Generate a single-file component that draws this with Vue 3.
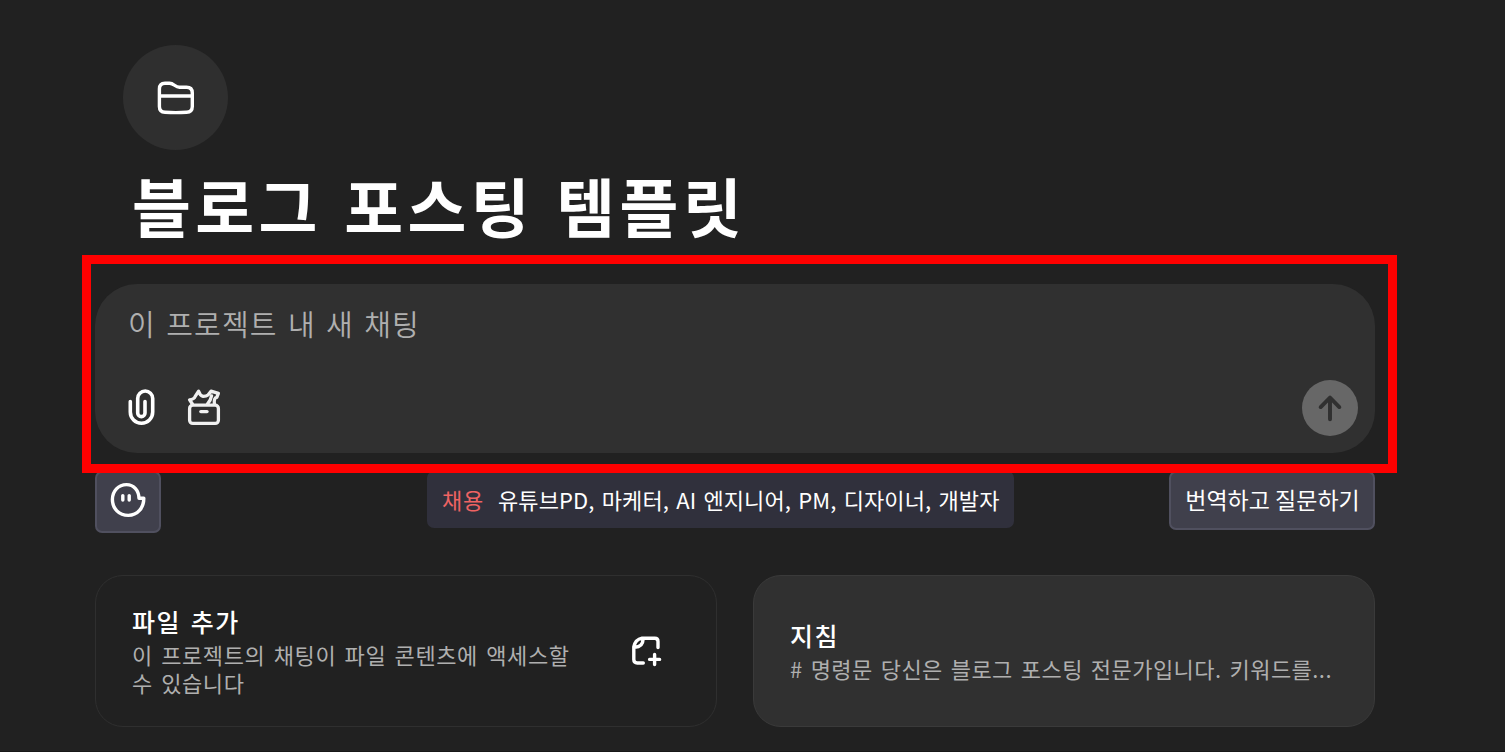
<template>
  <div class="page">
    <header class="project-header">
      <div class="project-icon">
        <svg width="38" height="36" viewBox="0 0 38 36">
          <path d="M2.4 9Q2.4 3.2 8 3.2H12.5C17 3.2 18 7.3 22.5 7.3H29.5Q35.3 7.3 35.3 13V26.5Q35.3 32 29.5 32.3Q18.8 33 8 32.3Q2.4 32 2.4 26.5ZM2.4 16H35.3" />
        </svg>
      </div>
      <h1 class="project-title">블로그 포스팅 템플릿</h1>
    </header>

    <!-- 채팅 입력창 -->
    <section class="composer">
      <div class="placeholder">이 프로젝트 내 새 채팅</div>
      <div class="composer-actions">
        <button class="icon-button clip">
          <svg width="30" height="40" viewBox="0 0 30 40">
            <path d="M3.3 14.5V25.1A11.2 11.2 0 0 0 25.7 25.1V11.5A7.5 7.5 0 0 0 10.7 11.5V26A3.65 3.65 0 0 0 18 26V14.5" />
          </svg>
        </button>
        <button class="icon-button tools">
          <svg width="36" height="40" viewBox="0 0 36 40">
            <rect x="3.6" y="18.2" width="28.8" height="18.2" rx="3.2" />
            <path d="M14.8 24.6H21" />
            <path d="M6.4 17L3.6 12.8Q8.4 12.2 9.2 9.4L12.6 4.2Q14 8.6 17.2 9.4Q20.4 9.2 22 8L25 4.2L32.4 6.4L30.8 10.4Q27.6 10.6 28.4 17.2M25.6 8.8Q24.8 13.4 21.4 17.2" />
          </svg>
        </button>
        <button class="send-button">
          <svg width="56" height="56" viewBox="0 0 57 57">
            <path d="M28.5 40V18.5M19 27.5L28.5 18L38 27.5" />
          </svg>
        </button>
      </div>
    </section>

    <!-- 확장 프로그램 바 -->
    <section class="extension-bar">
      <button class="face-button">
        <svg width="38" height="38" viewBox="0 0 38 38">
          <path d="M17.5 3.6C25 3.6 29.8 9.5 30 17.3H34.8C34.8 27 28.5 34.4 19.3 34.4C10 34.4 3.4 27.5 3.4 18.5C3.4 10 9.5 3.6 17.5 3.6Z" />
          <path d="M13.8 14.6V19M20.2 14.6V19" />
        </svg>
      </button>
      <div class="notice">
        <span class="notice-tag">채용</span>
        <span class="notice-text">유튜브PD, 마케터, AI 엔지니어, PM, 디자이너, 개발자</span>
      </div>
      <button class="ask-button">번역하고 질문하기</button>
    </section>

    <section class="cards">
      <article v-for="card in cards" :key="card.title" class="card" :class="card.type">
        <div class="card-body">
          <div class="card-title">{{ card.title }}</div>
          <div class="card-desc">{{ card.desc }}</div>
        </div>
        <svg v-if="card.type === 'files'" class="card-icon" width="34" height="34" viewBox="0 0 34 34">
          <path d="M13.3 29H7.2Q3.8 29 3.8 25.5V12.8Q5.5 5.4 12 4.2H24.8Q28 4.2 28 7.4V13.6M4.4 13.2Q12.8 13.4 13.2 4.6M24.6 20.4V30.6M19.6 25.4H29.6" />
        </svg>
      </article>
    </section>

    <!-- 강조 테두리 -->
    <div class="highlight" />
  </div>
</template>

<script setup>
const cards = [
  {
    type: 'files',
    title: '파일 추가',
    desc: '이 프로젝트의 채팅이 파일 콘텐츠에 액세스할\n수 있습니다'
  },
  {
    type: 'guide',
    title: '지침',
    desc: '# 명령문 당신은 블로그 포스팅 전문가입니다. 키워드를...'
  }
]
</script>

<style>
body {
  margin: 0;
  background: #212121;
}
</style>

<style scoped>
.page {
  position: relative;
  box-sizing: border-box;
  width: 1505px;
  height: 752px;
  padding: 45px 130px 0 95px;
  overflow: hidden;
  background: #212121;
  border-bottom: 1px solid #171717;
  color: #fff;
  font-family: 'Noto Sans CJK KR', sans-serif;
  white-space: nowrap;
}

svg {
  display: block;
  flex: none;
  fill: none;
  stroke: #fff;
  stroke-width: 3.4;
  stroke-linecap: round;
  stroke-linejoin: round;
}

button {
  box-sizing: border-box;
  padding: 0;
  border: none;
  background: none;
  color: inherit;
  font-family: inherit;
}

.project-header {
  height: 239px;
  padding-left: 28px;
}

.project-icon {
  display: flex;
  align-items: center;
  justify-content: center;
  width: 105px;
  height: 105px;
  border-radius: 50%;
  background: #2f2f2f;
}

.project-title {
  margin: 7px 0 0 9px;
  font-size: 64px;
  line-height: 94px;
  font-weight: 700;
  letter-spacing: 4.4px;
  word-spacing: 3.4px;
}

.composer {
  display: flex;
  flex-direction: column;
  justify-content: space-between;
  box-sizing: border-box;
  height: 169px;
  padding: 19px 17px 17px 32px;
  border-radius: 42px;
  background: #303030;
}

.placeholder {
  padding-left: 1px;
  font-size: 29px;
  line-height: 41px;
  font-weight: 350;
  letter-spacing: 1.2px;
  word-spacing: 2.6px;
  color: #afafaf;
}

.composer-actions {
  display: flex;
  align-items: center;
}

.icon-button {
  padding-bottom: 2px;
}

.icon-button.tools {
  margin-left: 29px;
}

.icon-button svg {
  stroke-width: 3.6;
}

.icon-button.tools svg {
  stroke: #f0f0f0;
  stroke-width: 3.3;
}

.send-button {
  margin-left: auto;
  border-radius: 50%;
  background: #676767;
}

.send-button svg {
  stroke: #303030;
  stroke-width: 4;
}

.extension-bar {
  display: flex;
  align-items: flex-start;
  height: 104px;
  padding-top: 18px;
}

.face-button,
.ask-button {
  border: 2px solid #50505f;
  border-radius: 7px;
  background: #40404c;
}

.face-button {
  display: flex;
  align-items: center;
  justify-content: center;
  width: 66px;
  height: 62px;
  padding-bottom: 4px;
}

.notice {
  display: flex;
  align-items: center;
  box-sizing: border-box;
  width: 587px;
  height: 57px;
  margin-left: 266px;
  padding: 0 0 2px 15px;
  border-radius: 7px;
  background: #30303c;
  font-size: 22px;
}

.notice-tag {
  width: 56px;
  letter-spacing: 0.8px;
  color: #ee6363;
}

.notice-text {
  letter-spacing: 0.1px;
  word-spacing: 2.2px;
}

.ask-button {
  width: 206px;
  height: 59px;
  margin-left: auto;
  padding: 0 0 2px 1px;
  font-size: 23px;
  line-height: 53px;
}

.cards {
  display: grid;
  grid-template-columns: 622px 622px;
  justify-content: space-between;
}

.card {
  display: flex;
  align-items: center;
  box-sizing: border-box;
  height: 152px;
  padding: 0 52px 0 36px;
  border: 1px solid #2f2f2f;
  border-radius: 28px;
}

.card.guide {
  background: #303030;
  border-color: #3a3a3a;
}

.card-title {
  padding-bottom: 3px;
  font-size: 25px;
  line-height: 31px;
  font-weight: 500;
  letter-spacing: 1.5px;
  word-spacing: 2.6px;
}

.card-desc {
  font-size: 22px;
  line-height: 28px;
  letter-spacing: 0.6px;
  word-spacing: 2.8px;
  white-space: pre;
  color: #afafaf;
}

.card.guide .card-desc {
  letter-spacing: 0.45px;
  word-spacing: 2.6px;
}

.card-icon {
  margin-left: auto;
}

.highlight {
  position: absolute;
  left: 82px;
  top: 255px;
  box-sizing: border-box;
  width: 1315px;
  height: 218px;
  border: 9px solid #ff0000;
}
</style>
